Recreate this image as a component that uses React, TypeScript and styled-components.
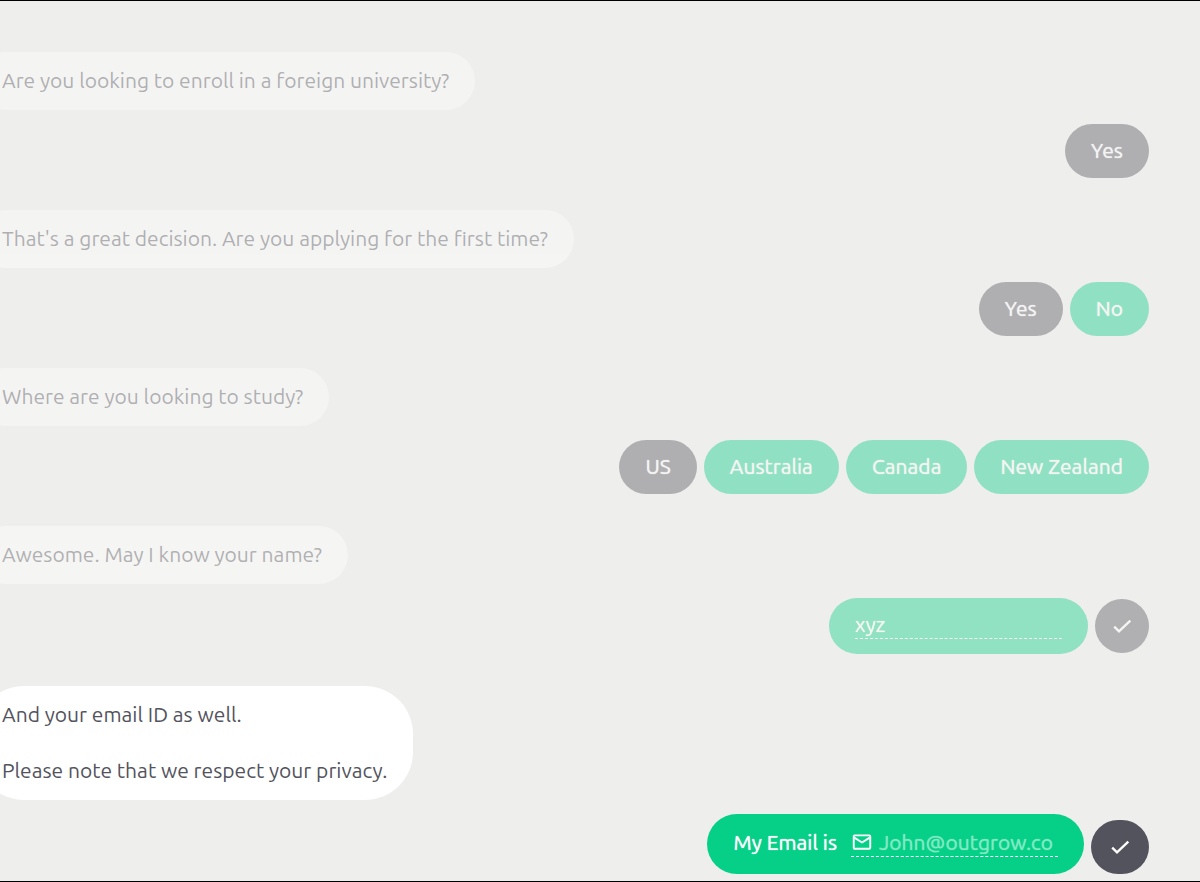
import React from "react";
import styled, { createGlobalStyle } from "styled-components";

const colors = {
  page: "#eeeeec",
  bubble: "#ffffff",
  ink: "#53535d",
  green: "#06cf87",
  placeholder: "#7feac3",
};

const GlobalStyle = createGlobalStyle`
  *, *::before, *::after { box-sizing: border-box; }
  body {
    margin: 0;
    background: ${colors.page};
    overflow-x: hidden;
  }
  body, button, input {
    font-family: Ubuntu, "Noto Sans", "Open Sans", sans-serif;
    font-size: 21px;
    line-height: 28px;
  }
`;

const Chat = styled.main`
  display: flex;
  flex-direction: column;
  gap: 32px;
  min-height: 100vh;
  padding: 51px 51px 7px 0;
  border-top: 1px solid #000;
  border-bottom: 1px solid #000;
  background: ${colors.page};
  overflow: hidden;
`;

const Exchange = styled.section<{ $answered?: boolean }>`
  display: flex;
  flex-direction: column;
  gap: 14px;
  opacity: ${(p) => (p.$answered ? 0.4 : 1)};
`;

const Bubble = styled.div`
  align-self: flex-start;
  display: flex;
  flex-direction: column;
  gap: 28px;
  margin-left: -24px;
  padding: 14px 26px 16px;
  border-radius: 48px;
  background: ${colors.bubble};
  color: ${colors.ink};
`;

const Line = styled.p`
  margin: 0;
`;

const Answers = styled.div<{ $align?: string }>`
  display: flex;
  justify-content: flex-end;
  align-items: ${(p) => p.$align ?? "center"};
  gap: 7px;
`;

const Choice = styled.button<{ $selected?: boolean }>`
  height: 54px;
  padding: 0 26px 2px;
  border: 0;
  border-radius: 27px;
  background: ${(p) => (p.$selected ? colors.ink : colors.green)};
  color: #fff;
  text-shadow: 0 0 1px #fff;
  cursor: pointer;
`;

const Field = styled.label<{ $tall?: boolean }>`
  display: flex;
  align-items: center;
  gap: 14px;
  height: ${(p) => (p.$tall ? 60 : 56)}px;
  padding: 0 26px 4px;
  border-radius: 30px;
  background: ${colors.green};
  color: #fff;
  text-shadow: 0 0 1px currentColor;
`;

const Entry = styled.span`
  display: flex;
  align-items: center;
  gap: 6px;
  width: 207px;
  border-bottom: 1px dashed #fff;
`;

const TextInput = styled.input`
  flex: 1;
  min-width: 0;
  height: 28px;
  padding: 0;
  border: 0;
  outline: 0;
  background: transparent;
  color: #fff;
  text-shadow: 0 0 1px currentColor;

  &::placeholder {
    color: ${colors.placeholder};
    opacity: 1;
  }
`;

const Submit = styled.button<{ $wide?: boolean }>`
  display: flex;
  align-items: center;
  justify-content: center;
  width: ${(p) => (p.$wide ? 58 : 54)}px;
  height: 54px;
  padding: 0;
  border: 0;
  border-radius: 27px;
  background: ${colors.ink};
  color: #fff;
  cursor: pointer;
`;

const CheckIcon = () => (
  <svg width="24" height="24" viewBox="0 0 24 24" fill="none" stroke="currentColor" strokeWidth="2.3" aria-hidden="true">
    <path d="M4.2 12.6 9 17.4 20.3 6.6" />
  </svg>
);

const MailIcon = () => (
  <svg width="22" height="22" viewBox="0 0 24 24" fill="none" stroke="currentColor" strokeWidth="2.1" strokeLinejoin="round" aria-hidden="true">
    <rect x="3" y="4.8" width="18" height="14.6" rx="1" />
    <path d="m3.6 7.200 8.400 5.400 8.400-5.400" />
  </svg>
);

const choiceQuestions = [
  { text: "Are you looking to enroll in a foreign university?", options: ["Yes"] },
  { text: "That's a great decision. Are you applying for the first time?", options: ["Yes", "No"] },
  { text: "Where are you looking to study?", options: ["US", "Australia", "Canada", "New Zealand"] },
];

export default function App() {
  return (
    <>
      <GlobalStyle />
      <Chat>
        {choiceQuestions.map((q) => (
          <Exchange key={q.text} $answered>
            <Bubble>
              <Line>{q.text}</Line>
            </Bubble>
            <Answers>
              {q.options.map((option, i) => (
                <Choice key={option} type="button" $selected={i === 0}>
                  {option}
                </Choice>
              ))}
            </Answers>
          </Exchange>
        ))}
        <Exchange $answered>
          <Bubble>
            <Line>Awesome. May I know your name?</Line>
          </Bubble>
          <Answers>
            <Field>
              <Entry>
                <TextInput type="text" aria-label="Your name" defaultValue="xyz" />
              </Entry>
            </Field>
            <Submit type="button" aria-label="Submit name">
              <CheckIcon />
            </Submit>
          </Answers>
        </Exchange>
        <Exchange>
          <Bubble>
            <Line>And your email ID as well.</Line>
            <Line>Please note that we respect your privacy.</Line>
          </Bubble>
          <Answers $align="flex-end">
            <Field $tall>
              My Email is
              <Entry>
                <MailIcon />
                <TextInput type="email" placeholder="John@outgrow.co" />
              </Entry>
            </Field>
            <Submit type="button" aria-label="Submit email" $wide>
              <CheckIcon />
            </Submit>
          </Answers>
        </Exchange>
      </Chat>
    </>
  );
}
